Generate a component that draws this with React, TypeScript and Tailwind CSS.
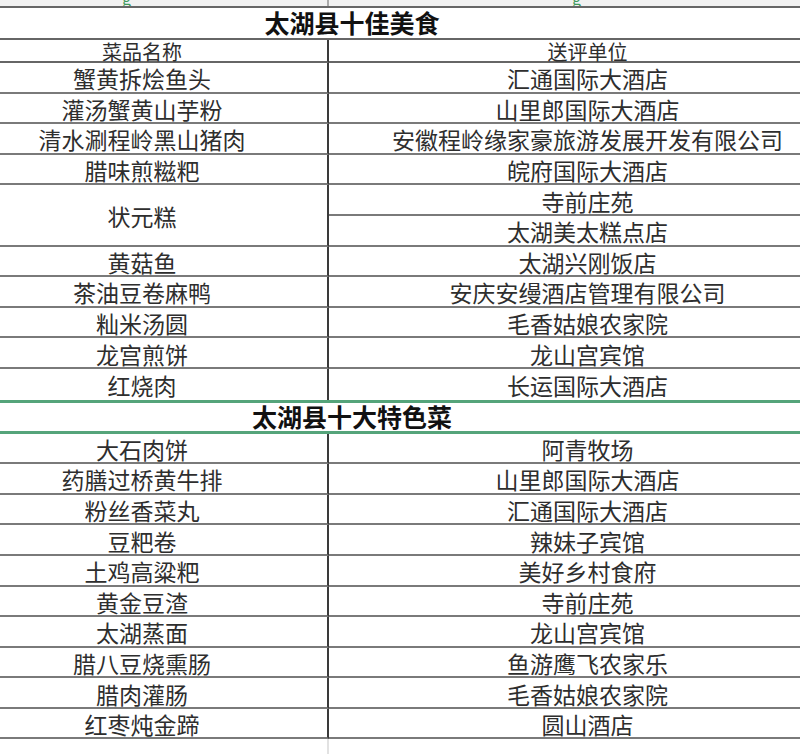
import React from 'react';

type Row = { dish: string; units: string[] };

const best: Row[] = [
  { dish: '蟹黄拆烩鱼头', units: ['汇通国际大酒店'] },
  { dish: '灌汤蟹黄山芋粉', units: ['山里郎国际大酒店'] },
  { dish: '清水涮程岭黑山猪肉', units: ['安徽程岭缘家豪旅游发展开发有限公司'] },
  { dish: '腊味煎糍粑', units: ['皖府国际大酒店'] },
  { dish: '状元糕', units: ['寺前庄苑', '太湖美太糕点店'] },
  { dish: '黄菇鱼', units: ['太湖兴刚饭店'] },
  { dish: '茶油豆卷麻鸭', units: ['安庆安缦酒店管理有限公司'] },
  { dish: '籼米汤圆', units: ['毛香姑娘农家院'] },
  { dish: '龙宫煎饼', units: ['龙山宫宾馆'] },
  { dish: '红烧肉', units: ['长运国际大酒店'] },
];

const special: Row[] = [
  { dish: '大石肉饼', units: ['阿青牧场'] },
  { dish: '药膳过桥黄牛排', units: ['山里郎国际大酒店'] },
  { dish: '粉丝香菜丸', units: ['汇通国际大酒店'] },
  { dish: '豆粑卷', units: ['辣妹子宾馆'] },
  { dish: '土鸡高粱粑', units: ['美好乡村食府'] },
  { dish: '黄金豆渣', units: ['寺前庄苑'] },
  { dish: '太湖蒸面', units: ['龙山宫宾馆'] },
  { dish: '腊八豆烧熏肠', units: ['鱼游鹰飞农家乐'] },
  { dish: '腊肉灌肠', units: ['毛香姑娘农家院'] },
  { dish: '红枣炖金蹄', units: ['圆山酒店'] },
];

const font = { fontFamily: '"Noto Sans CJK SC", "Noto Sans", sans-serif' };

// the sheet is cropped on both sides, so text sits off the visible centre
function Cell({ children, last, left, span }: { children: React.ReactNode; last?: boolean; left?: boolean; span?: boolean }) {
  return (
    <div
      className={`flex items-center justify-center pt-[3px] text-[23px] leading-none text-[#2e2e2e] ${
        span ? 'row-span-2' : 'h-[30.6px]'
      } ${last ? '' : 'border-b-2 border-b-[#7a7a7a]'} ${left ? 'border-r-2 border-r-[#3a3a3a] pr-[43px]' : 'pl-[46px]'}`}
    >
      <span className="whitespace-nowrap">{children}</span>
    </div>
  );
}

function Rows({ rows, lastOpen }: { rows: Row[]; lastOpen?: boolean }) {
  return (
    <div className="grid grid-cols-[329px_1fr]">
      {rows.map((r, i) => {
        const isLast = i === rows.length - 1;
        if (r.units.length > 1) {
          return (
            <React.Fragment key={r.dish}>
              <Cell left span>{r.dish}</Cell>
              <Cell>{r.units[0]}</Cell>
              <Cell>{r.units[1]}</Cell>
            </React.Fragment>
          );
        }
        return (
          <React.Fragment key={r.dish}>
            <Cell left last={isLast && lastOpen}>{r.dish}</Cell>
            <Cell last={isLast && lastOpen}>{r.units[0]}</Cell>
          </React.Fragment>
        );
      })}
    </div>
  );
}

export default function App() {
  return (
    <div className="w-[800px] h-[754px] bg-white overflow-hidden" style={font}>
      {/* strip cut off at the top */}
      <div className="grid grid-cols-[329px_1fr] h-[8px] bg-[#f1f1f1] border-b-2 border-b-[#666] overflow-hidden">
        <div className="border-r-2 border-r-[#aaa] relative">
          <span className="absolute left-[122px] -top-[14px] text-[16px] text-[#3f9a5c]">g</span>
        </div>
        <div className="relative">
          <span className="absolute left-[243px] -top-[14px] text-[16px] text-[#3f9a5c]">g</span>
        </div>
      </div>

      <div className="h-[32px] flex items-center justify-center pr-[96px] border-b-2 border-b-[#666] text-[25px] font-bold text-[#111]">
        <span>太湖县十佳美食</span>
      </div>

      <div className="grid grid-cols-[329px_1fr]">
        <div className="h-[23px] flex items-center justify-center pt-[3px] pr-[43px] border-b-2 border-b-[#666] border-r-2 border-r-[#3a3a3a] text-[20px] leading-none text-[#2e2e2e]">
          菜品名称
        </div>
        <div className="h-[23px] flex items-center justify-center pt-[3px] pl-[46px] border-b-2 border-b-[#666] text-[20px] leading-none text-[#2e2e2e]">
          送评单位
        </div>
      </div>

      <Rows rows={best} lastOpen />

      <div className="h-[34px] flex items-center justify-center pr-[96px] border-y-[3px] border-y-[#55a47a] text-[25px] font-bold text-[#111]">
        <span>太湖县十大特色菜</span>
      </div>

      <Rows rows={special} />

      <div className="grid grid-cols-[329px_1fr] h-[20px]">
        <div className="border-r-2 border-r-[#e2e2e2]" />
        <div />
      </div>
    </div>
  );
}
